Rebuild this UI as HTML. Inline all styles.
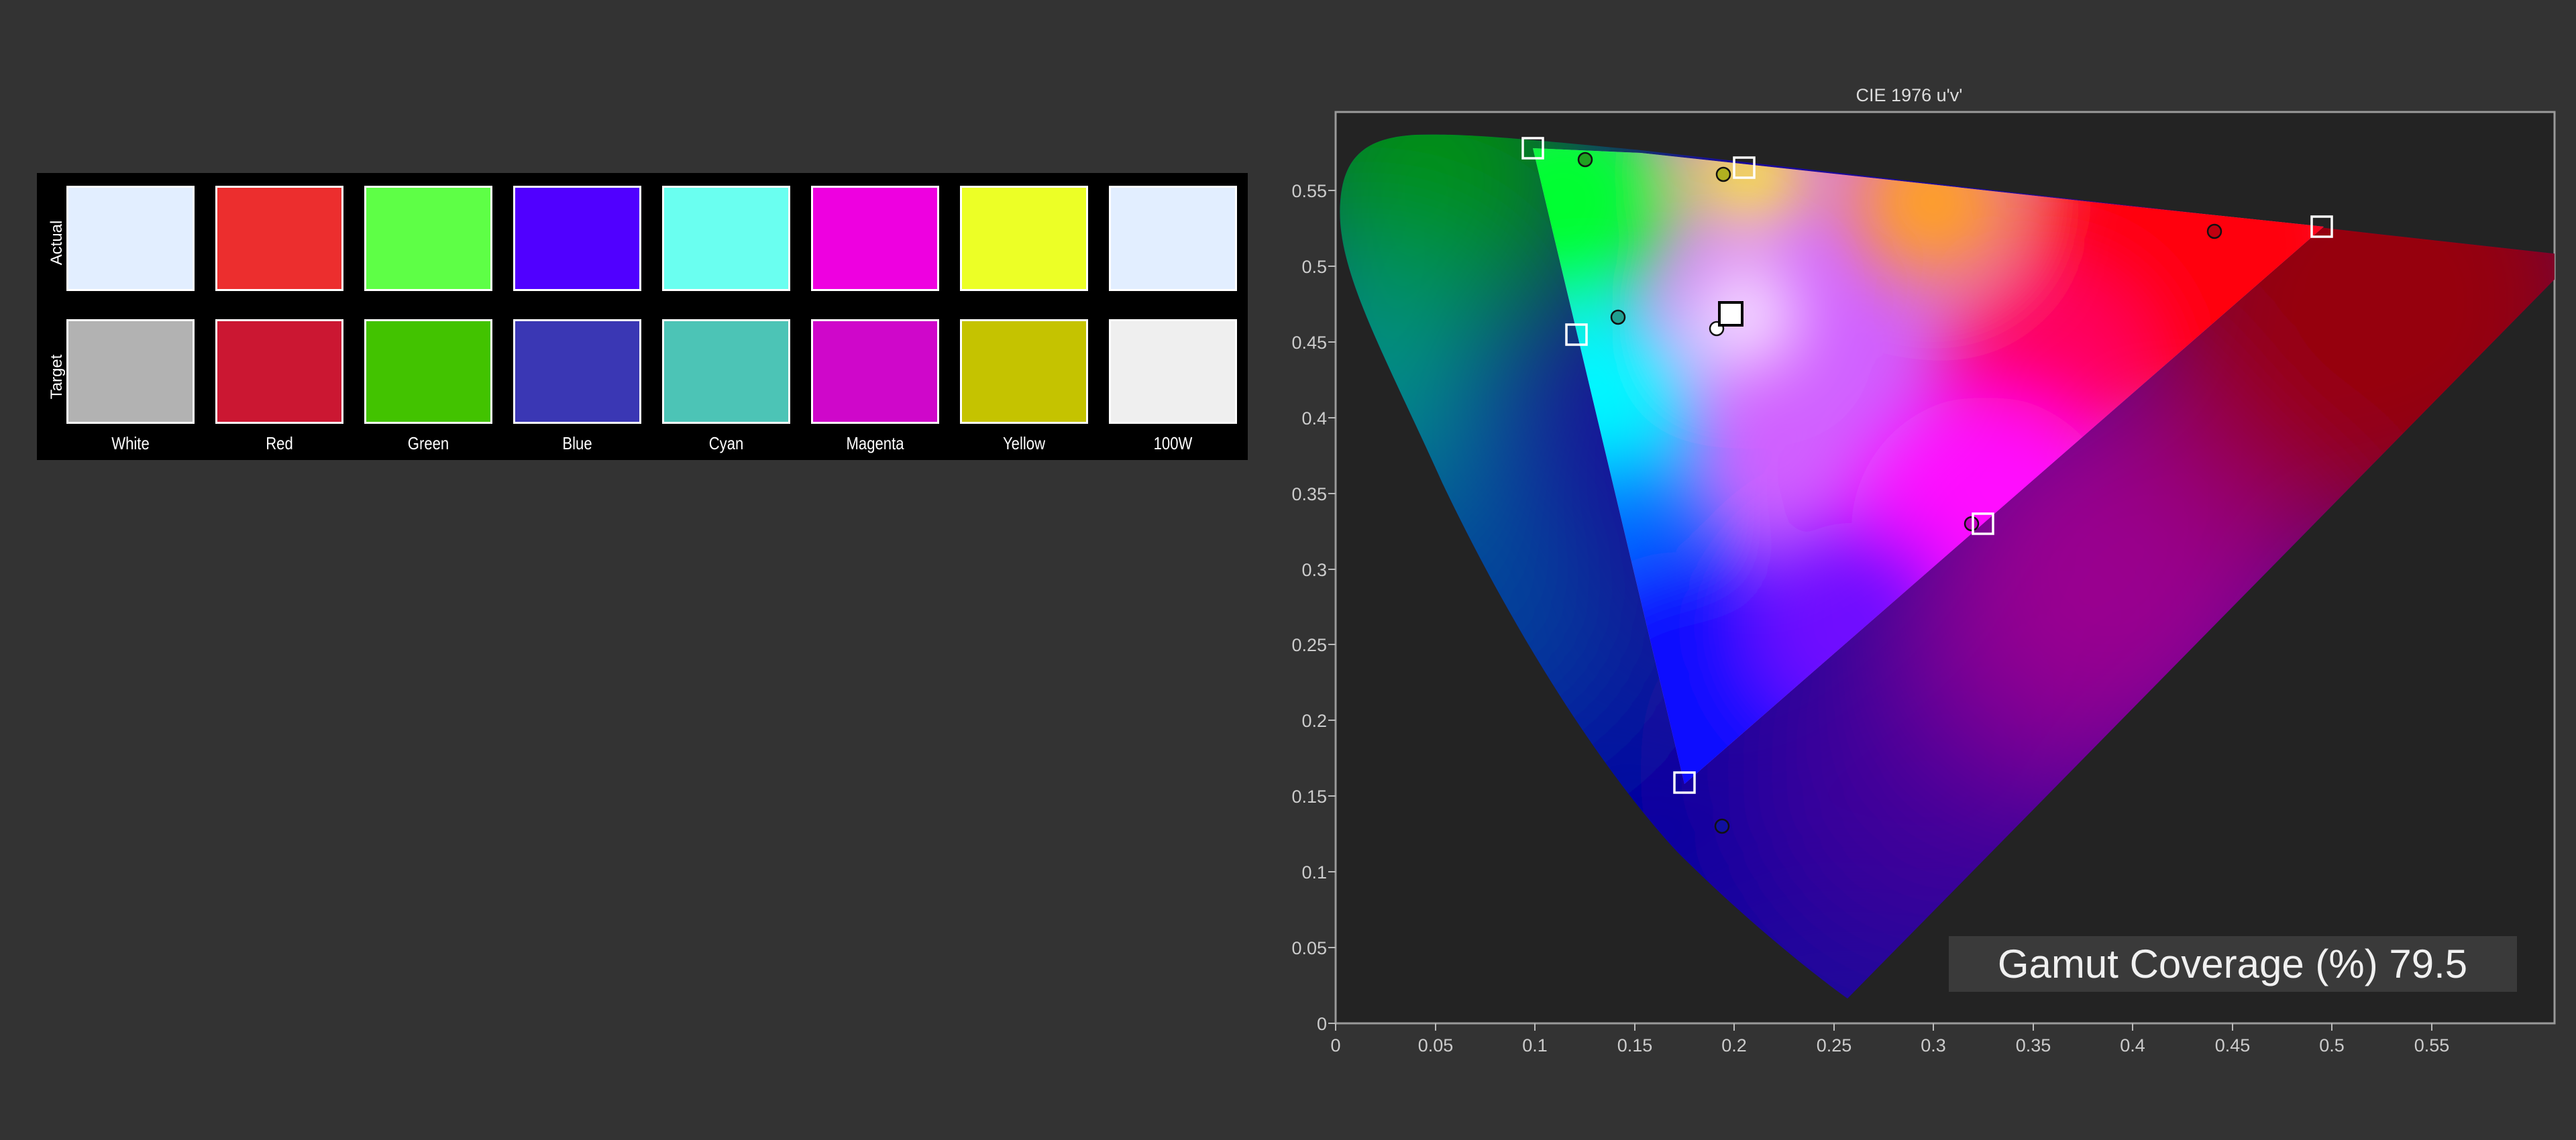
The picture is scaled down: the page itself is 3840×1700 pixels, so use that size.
<!DOCTYPE html>
<html><head><meta charset="utf-8"><style>
html,body{margin:0;padding:0;background:#333;}
body{width:3840px;height:1700px;position:relative;overflow:hidden;font-family:"Liberation Sans",sans-serif;}
.panel{position:absolute;left:55px;top:258px;width:1805px;height:428px;background:#000;}
.sw{position:absolute;width:185px;border:3px solid #fff;box-sizing:content-box;}
.lbl{position:absolute;top:388px;width:191px;text-align:center;color:#fff;font-size:26px;transform:scaleX(0.85);}
.rot{position:absolute;color:#fff;font-size:24px;transform:rotate(-90deg);transform-origin:center;}
</style></head><body>
<div class="panel">
 <div class="rot" style="left:-10px;top:90px;width:80px;text-align:center;">Actual</div>
 <div class="rot" style="left:-10px;top:290px;width:80px;text-align:center;">Target</div>
</div>
<div style="position:absolute;left:0;top:0;">
<div class="sw" style="left:99px;top:277px;height:151px;background:#e2eeff"></div>
<div class="sw" style="left:321px;top:277px;height:151px;background:#ec2e2e"></div>
<div class="sw" style="left:543px;top:277px;height:151px;background:#5eff46"></div>
<div class="sw" style="left:765px;top:277px;height:151px;background:#5000ff"></div>
<div class="sw" style="left:987px;top:277px;height:151px;background:#6afff0"></div>
<div class="sw" style="left:1209px;top:277px;height:151px;background:#ee00e0"></div>
<div class="sw" style="left:1431px;top:277px;height:151px;background:#ecff26"></div>
<div class="sw" style="left:1653px;top:277px;height:151px;background:#e2eeff"></div>
<div class="sw" style="left:99px;top:476px;height:150px;background:#b2b2b2"></div>
<div class="sw" style="left:321px;top:476px;height:150px;background:#cb1732"></div>
<div class="sw" style="left:543px;top:476px;height:150px;background:#42c300"></div>
<div class="sw" style="left:765px;top:476px;height:150px;background:#3a37b4"></div>
<div class="sw" style="left:987px;top:476px;height:150px;background:#4cc4b6"></div>
<div class="sw" style="left:1209px;top:476px;height:150px;background:#cf07ca"></div>
<div class="sw" style="left:1431px;top:476px;height:150px;background:#c5c300"></div>
<div class="sw" style="left:1653px;top:476px;height:150px;background:#efefef"></div>
</div>
<div style="position:absolute;left:55px;top:258px;">
<div class="lbl" style="left:44px">White</div>
<div class="lbl" style="left:266px">Red</div>
<div class="lbl" style="left:488px">Green</div>
<div class="lbl" style="left:710px">Blue</div>
<div class="lbl" style="left:932px">Cyan</div>
<div class="lbl" style="left:1154px">Magenta</div>
<div class="lbl" style="left:1376px">Yellow</div>
<div class="lbl" style="left:1598px">100W</div>
</div>

<svg width="3840" height="1700" style="position:absolute;left:0;top:0" xmlns="http://www.w3.org/2000/svg">
<defs>
 <clipPath id="plot"><rect x="1991" y="167" width="1817" height="1359"/></clipPath>
 <clipPath id="horse"><path d="M2754,1489 C2700,1450 2600,1370 2500,1270 C2380,1140 2250,930 2150,720 C2060,520 1990,400 1998,300 C2003,230 2040,205 2110,201 C2180,199 2250,205 2446,224 L2770,261 L3189,308 L3536,348 L3842,382 Z"/></clipPath>
 <clipPath id="tri"><path d="M2285,221 L2446,228 L2770,263 L3189,309 L3464,338 L2511,1169 Z"/></clipPath>
 <filter id="b1" x="-50%" y="-50%" width="200%" height="200%"><feGaussianBlur stdDeviation="110"/></filter>
 <filter id="b2" x="-50%" y="-50%" width="200%" height="200%"><feGaussianBlur stdDeviation="55"/></filter>
</defs>
<text x="2846" y="151" fill="#ddd" font-size="27" text-anchor="middle" font-family="Liberation Sans">CIE 1976 u'v'</text>
<rect x="1991" y="167" width="1817" height="1359" fill="#232323" stroke="#9a9a9a" stroke-width="3"/>
<g clip-path="url(#plot)">
 <g clip-path="url(#horse)">
  <rect x="1980" y="150" width="1900" height="1400" fill="#1a0a9a"/>
  <g filter="url(#b1)">
   <circle cx="2130" cy="260" r="280" fill="#009010"/>
   <circle cx="2040" cy="580" r="180" fill="#009a88"/>
   <circle cx="2200" cy="880" r="200" fill="#00489a"/>
   <circle cx="2450" cy="1250" r="250" fill="#0000a0"/>
   <circle cx="2900" cy="1150" r="280" fill="#40009a"/>
   <circle cx="3150" cy="850" r="300" fill="#9a0090"/>
   <circle cx="3550" cy="450" r="380" fill="#96000c"/>
  </g>
 </g>
 <g clip-path="url(#tri)">
  <rect x="2200" y="150" width="1400" height="1100" fill="#d060ff"/>
  <g filter="url(#b2)">
   <circle cx="2330" cy="300" r="170" fill="#00ff30"/>
   <circle cx="2380" cy="600" r="150" fill="#00f8ff"/>
   <circle cx="2420" cy="820" r="140" fill="#0070ff"/>
   <circle cx="2610" cy="260" r="80" fill="#ffff20"/>
   <circle cx="2880" cy="300" r="120" fill="#ffa020"/>
   <circle cx="3280" cy="370" r="260" fill="#ff0010"/>
   <circle cx="3050" cy="560" r="160" fill="#ff0060"/>
   <circle cx="2960" cy="790" r="200" fill="#ff10ff"/>
   <circle cx="2520" cy="1060" r="240" fill="#0a0aff"/>
   <circle cx="2760" cy="930" r="150" fill="#7010ff"/>
   <circle cx="2600" cy="470" r="75" fill="#ffffff"/>
  </g>
 </g>
</g>
<g stroke="#bbb" stroke-width="2">
 <path d="M1980,1526H1991M1980,1413H1991M1980,1300H1991M1980,1187H1991M1980,1074H1991M1980,961H1991M1980,849H1991M1980,736H1991M1980,623H1991M1980,510H1991M1980,397H1991M1980,284H1991"/>
 <path d="M1991,1526V1537M2140,1526V1537M2288,1526V1537M2437,1526V1537M2585,1526V1537M2734,1526V1537M2882,1526V1537M3031,1526V1537M3179,1526V1537M3328,1526V1537M3476,1526V1537M3625,1526V1537"/>
</g>
<g fill="#ccc" font-size="27" font-family="Liberation Sans" text-anchor="end">
 <text x="1978" y="1536">0</text><text x="1978" y="1423">0.05</text><text x="1978" y="1310">0.1</text><text x="1978" y="1197">0.15</text><text x="1978" y="1084">0.2</text><text x="1978" y="971">0.25</text><text x="1978" y="859">0.3</text><text x="1978" y="746">0.35</text><text x="1978" y="633">0.4</text><text x="1978" y="520">0.45</text><text x="1978" y="407">0.5</text><text x="1978" y="294">0.55</text>
</g>
<g fill="#ccc" font-size="27" font-family="Liberation Sans" text-anchor="middle">
 <text x="1991" y="1568">0</text><text x="2140" y="1568">0.05</text><text x="2288" y="1568">0.1</text><text x="2437" y="1568">0.15</text><text x="2585" y="1568">0.2</text><text x="2734" y="1568">0.25</text><text x="2882" y="1568">0.3</text><text x="3031" y="1568">0.35</text><text x="3179" y="1568">0.4</text><text x="3328" y="1568">0.45</text><text x="3476" y="1568">0.5</text><text x="3625" y="1568">0.55</text>
</g>
<g stroke="#111" stroke-width="2.5">
 <circle cx="2363" cy="238" r="10" fill="#20a020"/>
 <circle cx="2569" cy="260" r="10" fill="#b0b020"/>
 <circle cx="3301" cy="345" r="10" fill="#c00010"/>
 <circle cx="2412" cy="473" r="10" fill="#20a090"/>
 <circle cx="2559" cy="490" r="10" fill="#ffffff"/>
 <circle cx="2939" cy="781" r="10" fill="#c000c0"/>
 <circle cx="2567" cy="1232" r="10" fill="#1010a0"/>
</g>
<g fill="none" stroke="#fff" stroke-width="3.5">
 <rect x="2270" y="206" width="30" height="30"/>
 <rect x="2585" y="235" width="30" height="30"/>
 <rect x="3446" y="323" width="30" height="30"/>
 <rect x="2335" y="484" width="30" height="30"/>
 <rect x="2941" y="766" width="30" height="30"/>
 <rect x="2496" y="1152" width="30" height="30"/>
</g>
<rect x="2563" y="451" width="34" height="34" fill="#fff" stroke="#000" stroke-width="4"/>
<rect x="2905" y="1396" width="847" height="83" fill="#3a3a3a"/>
<text x="3328" y="1458" fill="#f0f0f0" font-size="60" text-anchor="middle" font-family="Liberation Sans">Gamut Coverage (%) 79.5</text>
</svg>
</body></html>
